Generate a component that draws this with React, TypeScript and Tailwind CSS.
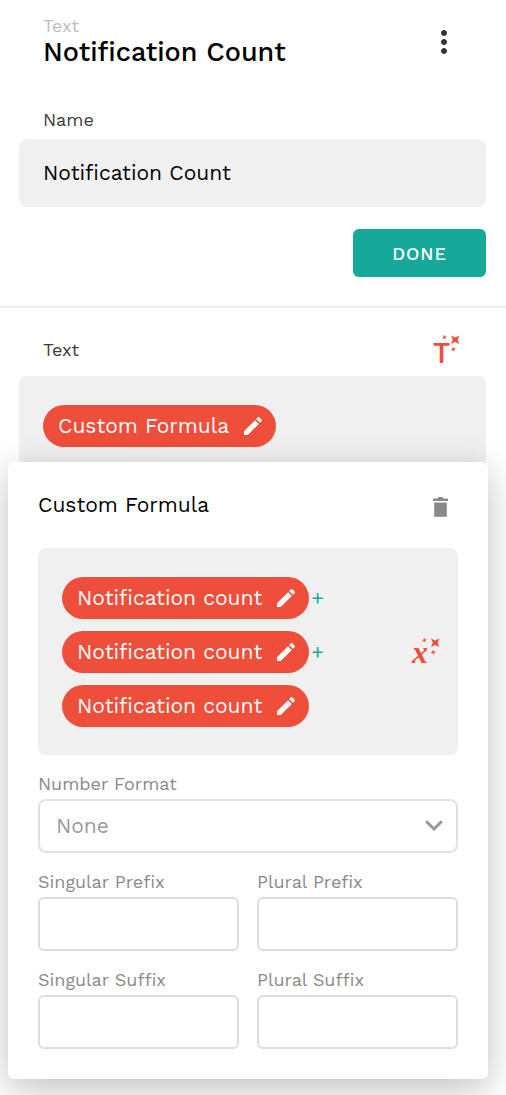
import { useId, useState } from "react";
import { MdEdit, MdMoreVert } from "react-icons/md";

function Sparkles() {
  return (
    <g fill="#ef4e3a">
      <path d="M18 1.5 22.2 3.4 26.4 1.5 24.6 5.7 26.4 9.9 22.2 8.1 18 9.9 19.8 5.7Z" />
      <path d="M11 0.8 12 2.6 14 2 12.3 3.7 12.4 5.4 11 4.3 8.8 4.4 10.4 2.8Z" />
      <path d="M20 12.6 21 14.4 23.2 14.2 21.4 15.8 21 17.8 19.7 16.2 17.8 16 19.4 14.6Z" />
    </g>
  );
}

function TextFormulaIcon() {
  return (
    <svg width="36" height="40" viewBox="-4 -4 36 40" aria-hidden="true">
      <text x="0" y="29" fill="#ef4e3a" className="font-['Roboto',sans-serif] text-[28px] font-medium">
        T
      </text>
      <Sparkles />
    </svg>
  );
}

function ValueFormulaIcon() {
  return (
    <svg width="38" height="42" viewBox="-6 -6 38 42" aria-hidden="true">
      <text x="-1" y="26" fill="#ef4e3a" className="font-['Liberation_Serif',serif] text-[32px] font-bold italic">
        x
      </text>
      <Sparkles />
    </svg>
  );
}

function TrashIcon() {
  return (
    <svg width="15" height="20" viewBox="0 0 15 20" fill="#8a8a8a" aria-hidden="true">
      <path d="M0 1.5H4.5L5.5 0H9.5L10.5 1.5H15V4H0Z" />
      <path d="M1.2 5.5H13.8V19.8H1.2Z" />
    </svg>
  );
}

function ChevronIcon() {
  return (
    <svg
      width="18"
      height="12"
      viewBox="0 0 18 12"
      fill="none"
      stroke="#9a9a9a"
      strokeWidth="3"
      strokeLinecap="round"
      aria-hidden="true"
      className="pointer-events-none absolute right-[15px]"
    >
      <path d="M2 2.2 9 9 16 2.2" />
    </svg>
  );
}

function Pill({ label }: { label: string }) {
  return (
    <button
      type="button"
      className="flex h-[42px] items-center gap-3 rounded-full bg-[#ef4e3a] pr-[11px] pl-[15px] text-[21px] text-white"
    >
      {label}
      <MdEdit size={24} aria-hidden="true" />
    </button>
  );
}

function AffixField({ label }: { label: string }) {
  const id = useId();
  return (
    <div className="flex min-w-0 flex-col">
      <label htmlFor={id} className="text-[18px] leading-[30px] text-[#8a8a8a]">
        {label}
      </label>
      <input
        id={id}
        type="text"
        className="h-[54px] w-full rounded-md border-2 border-[#dcdcdc] bg-white px-4 text-[21px] outline-none"
      />
    </div>
  );
}

function FormulaPopover() {
  const terms = ["Notification count", "Notification count", "Notification count"];
  return (
    <section
      aria-label="Custom Formula"
      className="absolute top-[86px] right-[18px] left-2 rounded-md bg-white px-[30px] pt-7 pb-[30px] shadow-[0_10px_36px_rgba(0,0,0,0.25)]"
    >
      <div className="flex items-center justify-between pr-[10px]">
        <h2 className="text-[21px] leading-[30px] text-black">Custom Formula</h2>
        <button type="button" aria-label="Delete formula" className="pt-1">
          <TrashIcon />
        </button>
      </div>

      <div className="mt-7 flex items-center justify-between rounded-lg bg-[#f0f0f0] pt-[29px] pr-[13px] pb-7 pl-6">
        <div className="flex flex-col gap-3">
          {terms.map((term, index) => (
            <div key={index} className="flex items-center gap-[2px]">
              <Pill label={term} />
              {index < terms.length - 1 && (
                <span className="text-[21px] text-[#16a999]">+</span>
              )}
            </div>
          ))}
        </div>
        <button type="button" aria-label="Insert value">
          <ValueFormulaIcon />
        </button>
      </div>

      <div className="mt-[14px] flex flex-col">
        <label htmlFor="number-format" className="text-[18px] leading-[30px] text-[#8a8a8a]">
          Number Format
        </label>
        <div className="relative flex items-center">
          <select
            id="number-format"
            className="h-[54px] w-full appearance-none rounded-lg border-2 border-[#e2e2e2] bg-white px-4 text-[21px] text-[#9a9a9a] outline-none"
          >
            <option>None</option>
          </select>
          <ChevronIcon />
        </div>
      </div>

      <div className="mt-[14px] grid grid-cols-2 gap-x-[18px] gap-y-[14px]">
        <AffixField label="Singular Prefix" />
        <AffixField label="Plural Prefix" />
        <AffixField label="Singular Suffix" />
        <AffixField label="Plural Suffix" />
      </div>
    </section>
  );
}

export default function App() {
  const [name, setName] = useState("Notification Count");
  return (
    <main className="min-h-screen overflow-hidden bg-white font-['Work_Sans','Inter',sans-serif]">
      <div className="border-b-2 border-[#eeeeee] pr-5 pb-[29px] pl-[19px]">
        <header className="flex items-center justify-between pt-4 pr-6 pl-6">
          <div>
            <p className="text-[18px] leading-5 text-[#bdbdbd]">Text</p>
            <h1 className="text-[27px] leading-8 font-medium text-black">Notification Count</h1>
          </div>
          <button type="button" aria-label="More options" className="text-[#333333]">
            <MdMoreVert size={36} />
          </button>
        </header>

        <label htmlFor="name" className="mt-[37px] block pl-6 text-[18px] leading-[30px] text-[#3c3c3c]">
          Name
        </label>
        <input
          id="name"
          type="text"
          value={name}
          onChange={(event) => setName(event.target.value)}
          className="mt-1 h-[68px] w-full rounded-lg bg-[#f0f0f0] px-6 pb-[2px] text-[21px] text-black outline-none"
        />

        <div className="mt-[22px] flex justify-end">
          <button
            type="button"
            className="h-12 w-[133px] rounded-md bg-[#16a999] text-[18px] font-medium tracking-wider text-white"
          >
            DONE
          </button>
        </div>
      </div>

      <div className="flex items-center justify-between pt-[22px] pr-[41px] pb-[6px] pl-[43px]">
        <h2 className="text-[18px] leading-[30px] text-[#3c3c3c]">Text</h2>
        <button type="button" aria-label="Insert text">
          <TextFormulaIcon />
        </button>
      </div>

      <div className="relative">
        <div className="mr-5 ml-[19px] flex h-32 items-start rounded-lg bg-[#f0f0f0] px-6 pt-[29px]">
          <Pill label="Custom Formula" />
        </div>
        <FormulaPopover />
      </div>
    </main>
  );
}
